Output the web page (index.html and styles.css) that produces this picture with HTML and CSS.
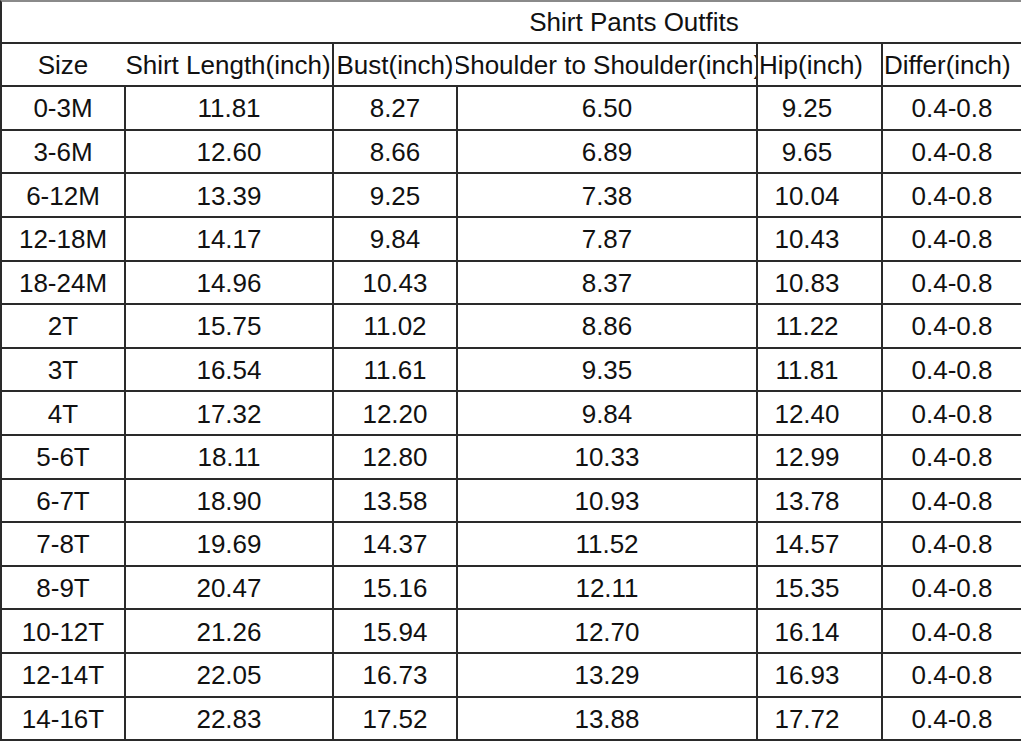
FILE: index.html
```html
<!DOCTYPE html>
<html lang="en">
<head>
<meta charset="utf-8">
<title>Shirt Pants Outfits</title>
<link rel="stylesheet" href="styles.css">
</head>
<body>
<div class="sheet" role="table">
  <div class="title" role="row"><span>Shirt Pants Outfits</span></div>

  <div class="cell hd b" role="columnheader"><span>Size</span></div>
  <div class="cell hd" role="columnheader"><span>Shirt Length(inch)</span></div>
  <div class="cell hd b" role="columnheader"><span>Bust(inch)</span></div>
  <div class="cell hd clip" role="columnheader"><span>Shoulder to Shoulder(inch)</span></div>
  <div class="cell hd b left" role="columnheader"><span>Hip(inch)</span></div>
  <div class="cell hd b left" role="columnheader"><span>Differ(inch)</span></div>

  <div class="cell b">0-3M</div><div class="cell b">11.81</div><div class="cell b">8.27</div><div class="cell b">6.50</div><div class="cell b hip">9.25</div><div class="cell b">0.4-0.8</div>
  <div class="cell b">3-6M</div><div class="cell b">12.60</div><div class="cell b">8.66</div><div class="cell b">6.89</div><div class="cell b hip">9.65</div><div class="cell b">0.4-0.8</div>
  <div class="cell b">6-12M</div><div class="cell b">13.39</div><div class="cell b">9.25</div><div class="cell b">7.38</div><div class="cell b hip">10.04</div><div class="cell b">0.4-0.8</div>
  <div class="cell b">12-18M</div><div class="cell b">14.17</div><div class="cell b">9.84</div><div class="cell b">7.87</div><div class="cell b hip">10.43</div><div class="cell b">0.4-0.8</div>
  <div class="cell b">18-24M</div><div class="cell b">14.96</div><div class="cell b">10.43</div><div class="cell b">8.37</div><div class="cell b hip">10.83</div><div class="cell b">0.4-0.8</div>
  <div class="cell b">2T</div><div class="cell b">15.75</div><div class="cell b">11.02</div><div class="cell b">8.86</div><div class="cell b hip">11.22</div><div class="cell b">0.4-0.8</div>
  <div class="cell b">3T</div><div class="cell b">16.54</div><div class="cell b">11.61</div><div class="cell b">9.35</div><div class="cell b hip">11.81</div><div class="cell b">0.4-0.8</div>
  <div class="cell b">4T</div><div class="cell b">17.32</div><div class="cell b">12.20</div><div class="cell b">9.84</div><div class="cell b hip">12.40</div><div class="cell b">0.4-0.8</div>
  <div class="cell b">5-6T</div><div class="cell b">18.11</div><div class="cell b">12.80</div><div class="cell b">10.33</div><div class="cell b hip">12.99</div><div class="cell b">0.4-0.8</div>
  <div class="cell b">6-7T</div><div class="cell b">18.90</div><div class="cell b">13.58</div><div class="cell b">10.93</div><div class="cell b hip">13.78</div><div class="cell b">0.4-0.8</div>
  <div class="cell b">7-8T</div><div class="cell b">19.69</div><div class="cell b">14.37</div><div class="cell b">11.52</div><div class="cell b hip">14.57</div><div class="cell b">0.4-0.8</div>
  <div class="cell b">8-9T</div><div class="cell b">20.47</div><div class="cell b">15.16</div><div class="cell b">12.11</div><div class="cell b hip">15.35</div><div class="cell b">0.4-0.8</div>
  <div class="cell b">10-12T</div><div class="cell b">21.26</div><div class="cell b">15.94</div><div class="cell b">12.70</div><div class="cell b hip">16.14</div><div class="cell b">0.4-0.8</div>
  <div class="cell b">12-14T</div><div class="cell b">22.05</div><div class="cell b">16.73</div><div class="cell b">13.29</div><div class="cell b hip">16.93</div><div class="cell b">0.4-0.8</div>
  <div class="cell b">14-16T</div><div class="cell b">22.83</div><div class="cell b">17.52</div><div class="cell b">13.88</div><div class="cell b hip">17.72</div><div class="cell b">0.4-0.8</div>
</div>
</body>
</html>
```

FILE: styles.css
```css
html, body {
  margin: 0;
  padding: 0;
  background: #ffffff;
}

body {
  width: 1021px;
  height: 741px;
  overflow: hidden;
}

.sheet {
  display: grid;
  grid-template-columns: 124px 208px 124px 300px 125px 140px;
  grid-auto-rows: 43.6px;
  width: 1021px;
  font-family: "Liberation Sans", Arial, sans-serif;
  font-size: 26px;
  color: #111111;
}

.title {
  grid-column: 1 / -1;
  box-sizing: border-box;
  border-top: 2px solid #8a8a8a;
  border-left: 2px solid #2a2a2a;
  border-bottom: 2px solid #2a2a2a;
  display: flex;
  align-items: center;
  justify-content: center;
  padding-left: 245px;
  padding-top: 1px;
  white-space: nowrap;
}

.cell {
  box-sizing: border-box;
  border-bottom: 2px solid #2a2a2a;
  display: flex;
  align-items: center;
  justify-content: center;
  white-space: nowrap;
  overflow: hidden;
  padding-top: 2px;
}

.cell.b {
  border-left: 2px solid #2a2a2a;
}

.cell.hd {
  overflow: visible;
}

.cell.clip {
  overflow: hidden;
  padding-left: 3px;
}

.cell.left {
  justify-content: flex-start;
  padding-left: 1px;
}

.cell.hip {
  padding-right: 25px;
}
```
